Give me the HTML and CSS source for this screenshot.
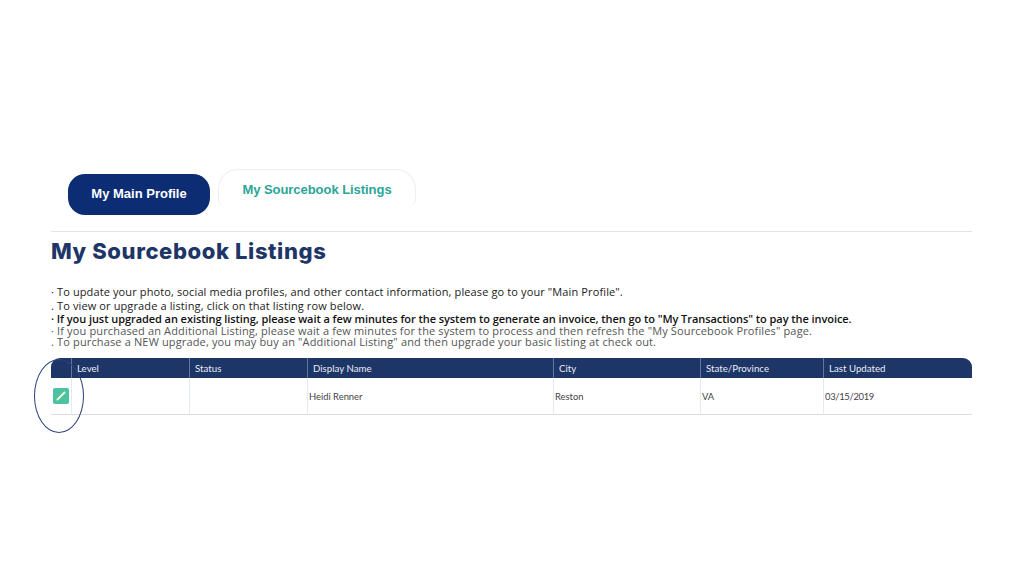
FILE: index.html
```html
<!DOCTYPE html>
<html lang="en">
<head>
  <meta charset="UTF-8">
  <meta name="viewport" content="width=device-width, initial-scale=1.0">
  <title>My Sourcebook Listings</title>
  <link rel="stylesheet" href="styles.css">
</head>

<body>
 <div class="page">
   <div class="tabs">
     <a class="tab tabActive">My Main Profile</a>
     <a class="tab tabOutline">My Sourcebook Listings</a>
   </div>
   <div class="content">
     <h1>My Sourcebook Listings</h1>
     <div class="notes">
       <p class="note">· To update your photo, social media profiles, and other contact information, please go to your "Main Profile".</p>
       <p class="note">. To view or upgrade a listing, click on that listing row below.</p>
       <p class="note noteStrong">· If you just upgraded an existing listing, please wait a few minutes for the system to generate an invoice, then go to "My Transactions" to pay the invoice.</p>
       <p class="note noteLight">· If you purchased an Additional Listing, please wait a few minutes for the system to process and then refresh the "My Sourcebook Profiles" page.</p>
       <p class="note noteLight">. To purchase a NEW upgrade, you may buy an "Additional Listing" and then upgrade your basic listing at check out.</p>
     </div>
     <div class="tableWrap">
       <table class="listings">
         <colgroup>
           <col class="colEdit"><col class="colLevel"><col class="colStatus"><col class="colName">
           <col class="colCity"><col class="colState"><col class="colUpdated">
         </colgroup>
         <thead>
           <tr>
             <th></th><th>Level</th><th>Status</th><th>Display Name</th>
             <th>City</th><th>State/Province</th><th>Last Updated</th>
           </tr>
         </thead>
         <tbody>
           <tr>
             <td class="editCell">
               <span class="editBtn">
                 <svg width="12" height="12" viewBox="0 0 12 12"><path d="M2.5 9.5L9.5 2.5" stroke="#eef8d2" stroke-width="2" stroke-linecap="round" fill="none"/></svg>
               </span>
             </td>
             <td></td><td></td><td>Heidi Renner</td><td>Reston</td><td>VA</td><td class="dateCell">03/15/2019</td>
           </tr>
         </tbody>
       </table>
       <!-- hand drawn circle over the edit button -->
       <div class="circleMark"></div>
     </div>
   </div>
 </div>
</body>
</html>
```

FILE: styles.css
```css
html,body{margin:0;padding:0;width:100%;height:100%;background:#fff;}
.page{padding-top:169px;box-sizing:border-box;}
.tabs{display:flex;align-items:flex-start;gap:8px;margin-left:68px;height:62px;box-sizing:border-box;}
.tab{font-family:"Liberation Sans",Arial,sans-serif;font-weight:bold;font-size:13px;display:flex;align-items:center;justify-content:center;box-sizing:border-box;}
.tabActive{width:142px;height:41px;margin-top:5px;padding-bottom:2px;background:#0c2c74;color:#fff;border-radius:17px;}
.tabOutline{width:198px;height:38px;padding-top:1px;color:#2ba597;letter-spacing:-.05px;border:1.5px solid #eeeeee;border-bottom:0;border-radius:20px 20px 8px 8px;}
.content{margin:0 52px 0 51px;border-top:1px solid #e4e4e4;}
h1{margin:6px 0 0;font-family:Inter,"Open Sans",sans-serif;font-weight:800;font-size:22px;line-height:27px;letter-spacing:.6px;color:#1e3568;}
.notes{margin-top:20px;}
.note{margin:0;font-family:"Open Sans",sans-serif;font-size:11px;line-height:14px;letter-spacing:.12px;color:#222;white-space:nowrap;}
.noteStrong{font-weight:600;color:#111;letter-spacing:-.065px;line-height:12px;}
.noteLight{color:#555;line-height:11px;letter-spacing:.145px;}
.tableWrap{position:relative;margin-top:11px;}
.listings{width:921px;border-collapse:separate;border-spacing:0;table-layout:fixed;font-family:Lato,"Open Sans",sans-serif;font-size:9.7px;}
.colEdit{width:20px}
.colLevel,.colStatus{width:118px}
.colName{width:246px}
.colCity{width:147px}
.colState{width:123px}
.colUpdated{width:149px}
.listings th{height:20px;padding:0 0 0 5px;box-sizing:border-box;background:#1e3568;color:#e8ecf4;font-weight:normal;text-align:left;border-left:1px solid #62789c;}
.listings th:first-child{border-left:0;border-top-left-radius:9px;}
.listings th:last-child{border-top-right-radius:9px;}
.listings td{height:37px;padding:0 0 0 1px;box-sizing:border-box;font-size:9.4px;color:#444;border-left:1px solid #e4eaf2;border-bottom:1.5px solid #dcdcdc;}
.listings td:first-child{border-left:0;}
.listings td.editCell{padding:0;}
.listings td.dateCell{letter-spacing:-.3px;}
.editBtn{display:flex;align-items:center;justify-content:center;width:16px;height:16px;margin-left:2px;background:#4cc2a3;border-radius:2px;}
.circleMark{position:absolute;left:-17px;top:1px;width:50px;height:74px;box-sizing:border-box;border:1px solid #2c4379;border-radius:50%;}
```
